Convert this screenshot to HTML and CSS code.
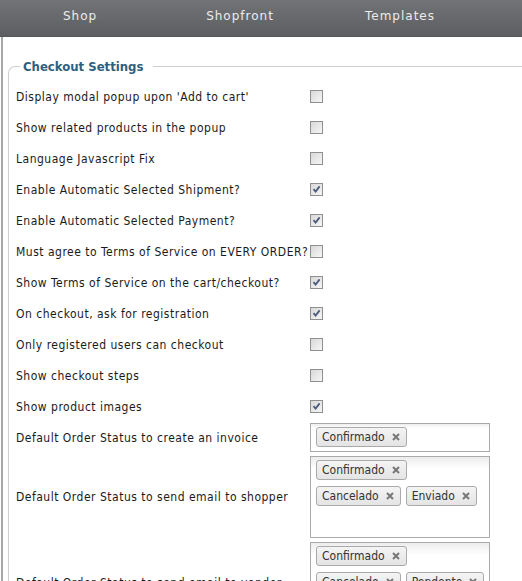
FILE: index.html
```html
<!DOCTYPE html>
<html>
<head>
<meta charset="utf-8">
<link rel="stylesheet" href="styles.css">
</head>
<body>
<div class="nav">
  <div class="nav-item">Shop</div>
  <div class="nav-item">Shopfront</div>
  <div class="nav-item">Templates</div>
</div>
<div class="content">
  <fieldset class="settings">
    <legend>Checkout Settings</legend>
    <div class="row"><div class="label">Display modal popup upon 'Add to cart'</div><span class="cb"></span></div>
    <div class="row"><div class="label">Show related products in the popup</div><span class="cb"></span></div>
    <div class="row"><div class="label">Language Javascript Fix</div><span class="cb"></span></div>
    <div class="row"><div class="label">Enable Automatic Selected Shipment?</div><span class="cb checked"><svg viewBox="0 0 11 11" width="11" height="11"><path d="M2.5 5.2 L4.6 7.6 L8.6 2.4" fill="none" stroke="#4b5b7b" stroke-width="1.8"/></svg></span></div>
    <div class="row"><div class="label">Enable Automatic Selected Payment?</div><span class="cb checked"><svg viewBox="0 0 11 11" width="11" height="11"><path d="M2.5 5.2 L4.6 7.6 L8.6 2.4" fill="none" stroke="#4b5b7b" stroke-width="1.8"/></svg></span></div>
    <div class="row"><div class="label">Must agree to Terms of Service on EVERY ORDER?</div><span class="cb"></span></div>
    <div class="row"><div class="label">Show Terms of Service on the cart/checkout?</div><span class="cb checked"><svg viewBox="0 0 11 11" width="11" height="11"><path d="M2.5 5.2 L4.6 7.6 L8.6 2.4" fill="none" stroke="#4b5b7b" stroke-width="1.8"/></svg></span></div>
    <div class="row"><div class="label">On checkout, ask for registration</div><span class="cb checked"><svg viewBox="0 0 11 11" width="11" height="11"><path d="M2.5 5.2 L4.6 7.6 L8.6 2.4" fill="none" stroke="#4b5b7b" stroke-width="1.8"/></svg></span></div>
    <div class="row"><div class="label">Only registered users can checkout</div><span class="cb"></span></div>
    <div class="row"><div class="label">Show checkout steps</div><span class="cb"></span></div>
    <div class="row"><div class="label">Show product images</div><span class="cb checked"><svg viewBox="0 0 11 11" width="11" height="11"><path d="M2.5 5.2 L4.6 7.6 L8.6 2.4" fill="none" stroke="#4b5b7b" stroke-width="1.8"/></svg></span></div>
    <div class="row row-select">
      <div class="label">Default Order Status to create an invoice</div>
      <div class="multi small">
        <div class="chip-line">
          <span class="chip">Confirmado<svg class="x" viewBox="0 0 8 8" width="8" height="8"><path d="M1 1 L7 7 M7 1 L1 7" stroke="#777" stroke-width="2"/></svg></span>
        </div>
      </div>
    </div>
    <div class="row row-select">
      <div class="label">Default Order Status to send email to shopper</div>
      <div class="multi tall">
        <div class="chip-line">
          <span class="chip">Confirmado<svg class="x" viewBox="0 0 8 8" width="8" height="8"><path d="M1 1 L7 7 M7 1 L1 7" stroke="#777" stroke-width="2"/></svg></span>
        </div>
        <div class="chip-line">
          <span class="chip">Cancelado<svg class="x" viewBox="0 0 8 8" width="8" height="8"><path d="M1 1 L7 7 M7 1 L1 7" stroke="#777" stroke-width="2"/></svg></span>
          <span class="chip">Enviado<svg class="x" viewBox="0 0 8 8" width="8" height="8"><path d="M1 1 L7 7 M7 1 L1 7" stroke="#777" stroke-width="2"/></svg></span>
        </div>
      </div>
    </div>
    <div class="row row-select">
      <div class="label">Default Order Status to send email to vendor</div>
      <div class="multi tall">
        <div class="chip-line">
          <span class="chip">Confirmado<svg class="x" viewBox="0 0 8 8" width="8" height="8"><path d="M1 1 L7 7 M7 1 L1 7" stroke="#777" stroke-width="2"/></svg></span>
        </div>
        <div class="chip-line">
          <span class="chip">Cancelado<svg class="x" viewBox="0 0 8 8" width="8" height="8"><path d="M1 1 L7 7 M7 1 L1 7" stroke="#777" stroke-width="2"/></svg></span>
          <span class="chip">Pendente<svg class="x" viewBox="0 0 8 8" width="8" height="8"><path d="M1 1 L7 7 M7 1 L1 7" stroke="#777" stroke-width="2"/></svg></span>
        </div>
      </div>
    </div>
  </fieldset>
</div>
</body>
</html>
```
FILE: styles.css
```css
html, body {
  margin: 0;
  padding: 0;
  background: #fff;
  overflow: hidden;
}
body {
  font-family: "DejaVu Sans Condensed", "DejaVu Sans", sans-serif;
  font-size: 12px;
  letter-spacing: 0.5px;
  color: #1a1a1a;
  width: 522px;
  height: 581px;
}
.nav {
  display: flex;
  height: 36px;
  background: linear-gradient(#727377, #5d5e62);
  border-bottom: 1px solid #55565a;
}
.nav-item {
  width: 160px;
  text-align: center;
  line-height: 33px;
  color: #ececec;
  letter-spacing: 1px;
  font-family: "DejaVu Sans", sans-serif;
  font-size: 12px;
}
.content {
  margin-left: 1px;
  border-left: 2px solid #a8a8a8;
  padding: 22px 0 0 5px;
  height: 600px;
}
.settings {
  margin: 0;
  width: 560px;
  border: 1px solid #cfcfcf;
  border-right: none;
  border-bottom: none;
  border-top-left-radius: 7px;
  padding: 7px 0 0 7px;
}
.settings legend {
  margin-left: 4px;
  padding: 0 10px 0 3px;
  font-family: "DejaVu Sans Condensed", "DejaVu Sans", sans-serif;
  letter-spacing: 0;
  font-weight: bold;
  font-size: 13px;
  color: #2d5f82;
}
.row {
  display: flex;
  align-items: center;
  height: 31px;
}
.label {
  width: 294px;
  flex: none;
  white-space: nowrap;
}
.cb {
  box-sizing: border-box;
  width: 13px;
  height: 13px;
  border: 1px solid #8e8f8f;
  background: linear-gradient(135deg, #d8d8d8, #f6f6f6);
  display: flex;
  align-items: center;
  justify-content: center;
}
.row-select {
  height: auto;
  padding: 1px 0 3px;
}
.multi {
  box-sizing: border-box;
  width: 180px;
  border: 1px solid #aaa;
  background: linear-gradient(#eeeeee 1%, #ffffff 15%);
  display: flex;
  flex-direction: column;
  gap: 6px;
  padding: 3px 5px;
}
.multi.small {
  height: 29px;
}
.multi.tall {
  height: 82px;
}
.chip-line {
  display: flex;
  gap: 5px;
}
.chip {
  box-sizing: border-box;
  height: 20px;
  display: inline-flex;
  align-items: center;
  gap: 7px;
  padding: 0 6px 0 5px;
  border: 1px solid #aaa;
  border-radius: 3px;
  background: linear-gradient(#f4f4f4, #e4e4e4);
  color: #333;
  font-size: 12px;
  letter-spacing: 0;
}
.x {
  flex: none;
}
```
